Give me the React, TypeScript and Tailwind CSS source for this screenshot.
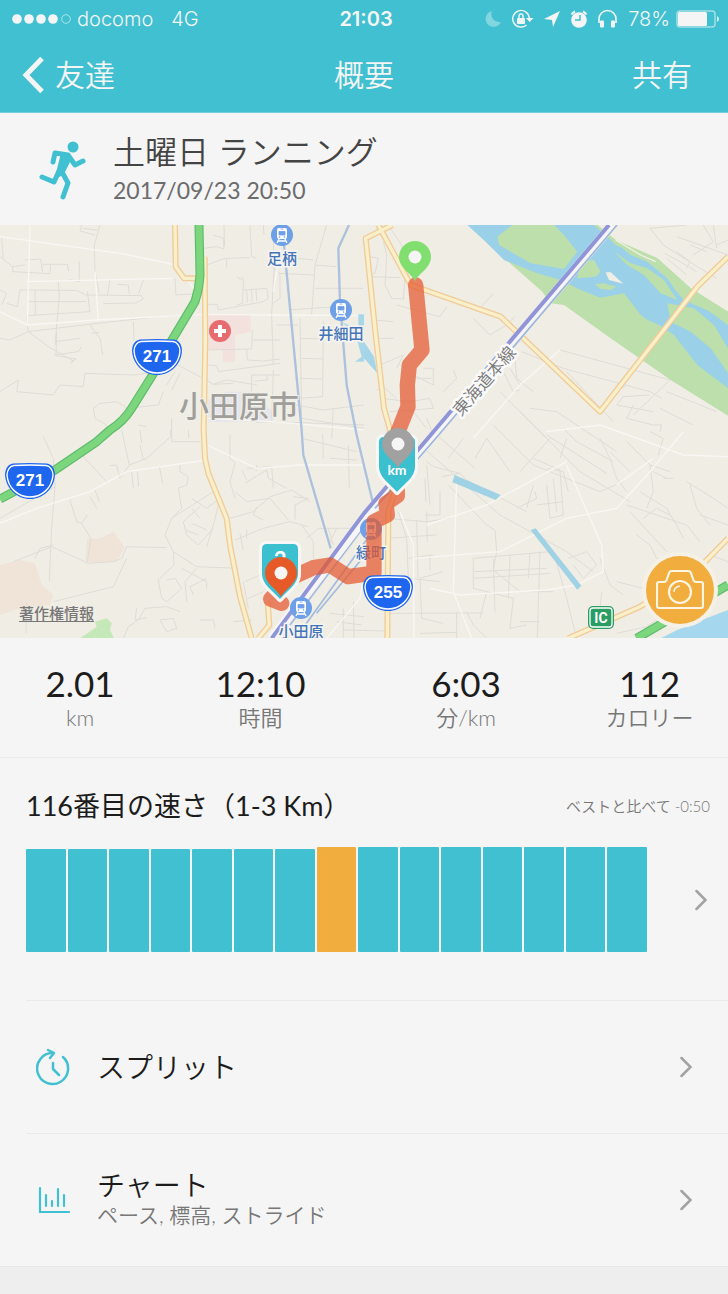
import type { ReactNode } from "react";

const jp = "font-['Lato','Noto_Sans_CJK_JP',sans-serif]";
const ios = "font-['Inter','Noto_Sans_CJK_JP',sans-serif]";

const bars = [103, 103, 103, 103, 103, 103, 103, 105, 105, 105, 105, 105, 105, 105, 105];
const best = 7;

const stats = [
  { value: "2.01", label: "km" },
  { value: "12:10", label: "時間" },
  { value: "6:03", label: "分/km" },
  { value: "112", label: "カロリー" },
];

// geometry below is in thirds of a map point
const mainRoads = [
  "M525 0L527 125L552 160L618 160",
  "M614 95L616 350L611 615L615 700L625 745L680 880L690 960L720 1115L755 1240",
  "M775 1240L808 1200L803 1130",
  "M1177 0L1097 40L1127 330L1152 550L1205 740L1165 860L1162 1240",
  "M1135 0L1232 180L1502 275L1800 560L2092 185L2184 95",
  "M2184 940L2072 1055L1920 1145L1705 1240",
];

const highways = [
  "M597 0L600 150Q598 190 585 230L510 355L470 430L395 550Q370 590 330 615L290 650L165 735L0 822",
  "M2184 1080L1910 1240",
];

const streets = [
  // north west
  "M245 0L240 18L285 30M250 10L292 16M300 0L283 60L285 140L298 205",
  "M5 40L10 100M0 95L38 125L75 120M38 125L38 140L150 146L152 118M75 105L122 102L128 140M128 118L202 118L206 138M238 110L238 170L208 164",
  "M60 195L230 196L258 210L425 212L430 222L408 234L310 236M175 170L178 210L165 360M105 196L106 270M60 195L52 245L20 235M85 230L260 230M80 272L270 260L262 200M0 195L20 205L5 240",
  "M352 178L385 180L388 208M430 165L415 208M330 165L322 210M85 320L300 294L480 275L610 268M85 320L80 275",
  "M0 340L30 345L85 320L145 365L220 408M165 350L240 340M163 390L235 380L245 365M170 320L168 392L228 402L210 415M270 300L300 340L308 390M275 325L298 322M400 290L402 345",
  "M0 500L55 465L50 500L160 510L180 480L250 485L255 445L400 450L440 445L530 418L600 455L640 478L700 475M540 445L515 495M525 440L500 480",
  "M280 550L300 535L350 530L400 560M280 550L285 580L320 600M400 548L475 540L490 500M415 600L440 605M515 580L515 650L600 650M565 615L567 640M525 160L528 210L590 206",
  // north centre
  "M610 70L650 65L672 72L670 40L640 30M672 0L674 65M750 0L755 95L770 100M620 120L675 100L750 98M680 100L680 128M790 0L792 30M820 20L822 130L815 270L820 420M822 130L840 145L940 150M840 145L840 220L820 235",
  "M725 155L730 165L728 235L710 240M728 195L800 190L805 220L790 230L655 255L652 238L625 238M740 195L742 232M755 195L756 230M768 192L770 228M710 155L725 165",
  "M980 0L945 120L935 270M945 120L1010 125M895 100L940 105M945 190L1090 190M865 255L1010 245M900 280L905 580L1092 610M900 340L970 342M905 400L970 402M970 290L968 515L900 520M900 460L970 462M830 300L895 300",
  "M620 375L755 372L757 315M757 345L840 345M740 372L742 405L790 408L840 402M625 420L650 422L655 440L840 415M755 450L755 500M800 450L802 465L765 468M755 450L840 450M640 478L680 465L770 480M820 435L815 590L770 592L765 560",
  "M820 590L1092 600M860 535L970 555L1092 540M905 640L1070 680M968 625L970 700M1045 660L1048 790M990 700L1070 705M1000 550L995 640",
  // west
  "M365 615L388 720L360 760L350 720L330 722M388 720L440 700L512 635L512 615M420 660L430 705M420 615L425 655M395 740L400 790M412 740L416 785M478 725L488 775M245 690L320 770",
  "M130 635L160 700L165 785L155 910L148 1068M165 785L0 880M155 965L265 1015L340 1010L365 1000L380 965L500 968M210 825L230 890L245 895L272 940L262 1010M245 895L262 870M270 815L290 850M285 795L298 830",
  "M40 1010L155 965M105 1000L120 970L160 960M80 1130L78 1225M160 1130L340 1085L380 1000M370 1240L385 1205L415 1185L435 1150L500 1145L540 1160M410 1150L405 1185L440 1178",
  "M535 790L560 780L565 755L540 740L540 720M535 790L545 850L515 880L495 930L520 980L590 1025L715 1030M515 880L640 800M520 980L522 1020L475 1065L485 1120L500 1130L545 1090L525 1060L500 1065M590 1030L555 1070L560 1130",
  "M575 820L620 850L660 820L640 900L620 965M600 845L550 890L560 930L595 960L640 910M575 895L620 915M575 850L600 880M555 915L595 930M480 1185L520 1180L530 1210L500 1220L480 1185M600 1185L640 1185L645 1210",
  "M620 1060L570 1085L580 1110M545 1030L620 1070L620 1090M690 880L760 860L810 815L875 795L930 830M705 800L740 830L810 820L865 885M735 775L800 735L805 760L860 790M725 735L740 765M740 730L815 725L820 790M770 720L768 740",
  "M690 630L690 700L705 715L690 770L705 820M770 845L760 870L790 885M880 815L925 820L885 840L885 885M705 945L790 910L870 890L925 905M720 925L730 975M740 915L740 940M905 900L940 950L940 1000",
  "M955 910L1090 910M955 910L920 940M985 910L1000 960M1010 910L990 950M700 1190L755 1185M735 1070L780 1050M745 1120L790 1100M730 1070L745 1150",
  // around the main station
  "M1030 1150L1030 1240M990 1165L1092 1175M1010 1190L1085 1200M1060 1130L1062 1240M1030 1215L1160 1218M1160 1165L1450 1164",
  "M1260 1060L1265 1180L1330 1195M1160 880L1280 890L1350 880M1160 940L1310 930M1250 885L1254 1060M1280 860L1282 950M1195 860L1220 940L1225 1060L1320 1070M1225 1000L1300 990M1290 990L1290 1035M1260 1060L1330 1040M1260 1225L1370 1222M1370 1160L1370 1240",
  "M1325 755L1380 745L1400 765L1580 860M1345 780L1460 900L1485 915L1490 980L1480 1035M1380 745L1300 725L1280 710M1275 760L1278 830M1320 800L1320 870L1275 870M1420 1000L1650 980M1420 1000L1420 1090L1540 1120M1420 1040L1640 1030M1420 1060L1650 1045",
  "M1480 1035L1560 1100L1660 1100M1480 1000L1485 1160M1530 990L1525 1120M1590 985L1585 1060M1620 980L1612 1240M1660 980L1700 1120L1730 1240M1400 1160L1420 1200L1460 1240M1460 1100L1440 1180M1540 1120L1530 1210L1580 1200M1620 1190L1560 1190",
  // south east
  "M1260 660L1500 870L1700 980L1780 1040M1310 630L1425 730M1390 640L1345 700M1425 700L1460 640L1530 740M1480 600L1600 720L1800 800L1870 770M1560 560L1680 680L1740 740L1890 830M1500 500L1640 640M1560 740L1650 640",
  "M1640 630L1820 745M1690 610L1730 650L1840 710M1700 640L1680 700M1640 730L1690 740L1705 800M1600 700L1680 735L1690 870L1650 880L1640 780M1600 780L1580 850M1660 760L1670 860M1550 850L1610 820L1605 800M1610 840L1690 830",
  "M1800 640L1830 700L1850 760L1880 800M1880 650L1950 720L2010 740M1830 680L1890 740M1950 620L1990 640L1975 690M1920 800L2000 850L2030 900L2050 940M1930 880L1970 850L2010 870M1880 840L2060 900L2100 950",
  "M1910 930L1950 960L1970 1000L2050 1030M1890 860L2000 980M2060 770L2140 820L2184 850M2070 780L2090 850L2130 900M1990 760L2020 760M1960 740L2000 760M1950 720L1960 800L1940 850",
  "M1705 1000L1760 980L1790 1020L1750 1060L1720 1020M1800 1000L1830 1080L1870 1110M1805 1100L1800 1150M1850 1070L1930 1090M1990 1170L1940 1205L1850 1225M2130 990L2184 1010M2100 870L2184 900",
  // inland between the railway and the river
  "M1330 500L1370 460L1360 435M1430 260L1480 205M1420 280L1470 330L1520 300L1545 275M1565 380L1690 430L1950 500L1985 520M1680 375L2010 465L1900 570M1590 550L1670 560L1760 620L1850 680M1700 440L1840 590",
  "M1545 400L1550 460L1600 500M1510 440L1540 500L1560 495M1530 430L1560 480M1850 540L1870 515L1950 510M1880 480L1850 500M1900 540L1880 580L1960 600M1960 600L1985 600L1980 620M1850 540L1960 560M2000 500L2150 560M1980 550L2080 600",
  "M2030 35L2100 60L2184 90M1990 60L2100 130L2150 160M1950 10L1990 60M1950 10L2060 0M1995 85L2040 110L2090 140M2030 80L2070 110L2060 130M2000 100L2060 150M2110 0L2140 50L2080 90M2070 60L2120 80M2150 60L2184 45M2140 0L2150 70",
  "M1150 50L1160 90L1155 180L1175 220L1210 222L1215 160M1110 155L1200 158M1110 95L1135 100L1125 145L1105 145M1165 0L1250 130M1190 240L1300 270L1320 275L1340 245M1120 285L1180 290M1130 340L1180 340M1140 420L1210 390L1190 430",
  "M1240 450L1300 480L1300 430L1270 430M1250 460L1295 460M1130 495L1155 490L1190 520M1145 520L1230 530L1290 520L1300 550L1170 560M1280 580L1300 630M1280 720L1290 840M1240 560L1280 610",
];

const whiteStreets = [
  "M0 35L360 85L530 120M90 0L82 300L0 260M82 300L290 285L610 268L830 270L1092 272M285 140L295 290M560 160L590 205M80 170L520 160",
  "M0 895L110 850L270 800L380 740L620 705M620 660L770 730L900 720L1092 720M840 80L820 200M625 580L820 590L1092 615",
  "M1200 860L1240 960L1242 1240M1240 1000L1500 980L1700 880L1850 850L1950 740L2050 620M1280 900L1460 840L1700 710M1370 760L1360 1100L1415 1240M1290 1090L1380 1110L1640 1095L1730 1080L1810 1040L1805 960L1700 720",
  "M1640 620L1800 600L2050 690L2184 695M1420 640L1560 480L1680 375M1850 780L1960 700M980 1240L1080 1120L1092 1050",
];

function Shield({ x, y, number }: { x: number; y: number; number: string }) {
  return (
    <g transform={`translate(${x} ${y})`}>
      <path
        d="M-17 -17.500Q0 -18.500 17 -17.500C22 -17 25 -12 25 -6C24 8 13 18 0 18C-13 18 -24 8 -25 -6C-25 -12 -22 -17 -17 -17.500Z"
        fill="#1f66ee"
      />
      <path
        d="M-16 -15.500Q0 -16.500 16 -15.500C20 -15 23 -11 23 -6C22 7 12 16 0 16C-12 16 -22 7 -23 -6C-23 -11 -20 -15 -16 -15.500Z"
        fill="none"
        stroke="#fff"
        strokeWidth="1.400"
      />
      <text y="5" textAnchor="middle" fontSize="17" fontWeight="700" fill="#fff" fontFamily="Liberation Sans, sans-serif">
        {number}
      </text>
    </g>
  );
}

function Station({ x, y, name }: { x: number; y: number; name: string }) {
  return (
    <g transform={`translate(${x} ${y})`}>
      <circle r="11" fill="#6ea0e8" />
      <path d="M-3 -7H3Q5 -7 5 -5V2Q5 4 3 4H-3Q-5 4 -5 2V-5Q-5 -7 -3 -7Z" fill="#fff" />
      <path d="M-3 -3.500H3V0H-3ZM-1.500 -6H1.500" fill="#6ea0e8" stroke="#6ea0e8" strokeWidth="0.800" />
      <path d="M-3 4L-5 8M3 4L5 8M-4 6H4" stroke="#fff" strokeWidth="1.300" />
      <circle cx="-2.500" cy="2" r="0.800" fill="#6ea0e8" />
      <circle cx="2.500" cy="2" r="0.800" fill="#6ea0e8" />
      <text
        y="29"
        textAnchor="middle"
        fontSize="15"
        fontWeight="500"
        fill="#4474b8"
        stroke="#f6f4f0"
        strokeWidth="3"
        paintOrder="stroke"
        fontFamily="Noto Sans CJK JP, sans-serif"
      >
        {name}
      </text>
    </g>
  );
}

function Pin({ x, y, color }: { x: number; y: number; color: string }) {
  return (
    <g transform={`translate(${x} ${y})`}>
      <path d="M0 24C-4 16 -16 11 -16 0A16 16 0 0 1 16 0C16 11 4 16 0 24Z" fill={color} />
      <circle r="6.500" fill="#f5f5f5" />
    </g>
  );
}

function KmMarker({ x, y, children }: { x: number; y: number; children: ReactNode }) {
  return (
    <g transform={`translate(${x} ${y})`}>
      <path
        d="M-13 -19H13Q18 -19 18 -14V11C18 21 8 27 0 36C-8 27 -18 21 -18 11V-14Q-18 -19 -13 -19Z"
        fill="#3bc0cf"
        stroke="#f7f7f7"
        strokeWidth="6"
        strokeLinejoin="round"
        paintOrder="stroke"
      />
      <g fill="#fff" fontFamily="Lato, sans-serif" fontWeight="700" textAnchor="middle">
        {children}
      </g>
    </g>
  );
}

function RouteMap() {
  return (
    <svg
      viewBox="0 0 728 413"
      preserveAspectRatio="xMidYMid slice"
      className="block h-[413px] w-full bg-[#f0ede5]"
      role="img"
      aria-label="ランニングのルート"
    >
      <g transform="scale(0.33333)" fill="none" strokeLinejoin="round">
        <path d="M625 270H752V320L705 330V410H668V375H625Z" fill="#f3e1de" />
        <path d="M622 525L680 500L750 500L820 560V590H625Z" fill="#e6e5ea" />
        <path d="M262 940L295 942L340 920L374 967L350 1010L300 1012L256 1010Z" fill="#f0e4d8" />
        <path d="M0 1020L60 1005L105 1015L125 1080L160 1110L150 1140L60 1150L0 1170Z" fill="#f0e4d8" />
        <path d="M240 1240L290 1205L285 1190L320 1180L335 1195L330 1215L342 1240Z" fill="#c5e8b8" />

        {streets.map((d) => (
          <path key={d} d={d} stroke="#dedcd6" strokeWidth="3" />
        ))}
        {whiteStreets.map((d) => (
          <path key={d} d={d} stroke="#f8f7f3" strokeWidth="4" />
        ))}

        <g transform="translate(1092 0)">
          <path
            d="M320 0L365 50L535 200L560 235L600 240L740 340L920 465L1092 572V260L980 190L880 100L755 45L700 0Z"
            fill="#bcdfab"
          />
          <path
            d="M310 0L365 50L420 105L520 145L590 165L650 195L710 218L780 205L830 270L850 285L885 300L930 330L1000 420L1092 490V300L1040 260L960 225L930 190L910 160L850 110L800 90L735 35L690 0Z"
            fill="#9ad1e8"
          />
          <g fill="#bcdfab">
            <path d="M445 0L400 35L405 60L500 115L600 132L640 80L600 30L570 0Z" />
            <path d="M650 110L690 105L710 140L695 155L640 160Z" />
            <path d="M692 178L720 175L757 185L740 195L710 192Z" />
            <path d="M750 80L790 120L840 150L890 205L940 225L900 165L850 130L800 115Z" />
            <path d="M910 235L990 250L1050 300L1092 370V445L1040 370L980 320L920 290Z" />
            <path d="M730 35L755 60L850 100L910 150L930 190L960 225L1030 255L1092 300V260L980 190L880 100L755 45L700 0H690Z" />
          </g>
          <path d="M725 142L740 142L778 176L735 165Z" fill="#f0ede5" />
          <path d="M755 45L830 90L875 110" stroke="#f4f2ea" strokeWidth="4" />
          <path d="M0 350L30 395L40 445L0 400Z" fill="#a5d5e8" />
          <path d="M272 750L410 810L395 825L265 772Z" fill="#a0d2e6" />
          <path d="M500 915L515 910L652 1082L640 1094Z" fill="#a0d2e6" />
          <path d="M1092 1155L1000 1190L940 1215L890 1240H1092Z" fill="#a5d7ee" />
        </g>
        <path d="M1025 290L1055 305L1092 350V410H1065L1085 395L1070 340L1045 310ZM1075 268H1092V320L1075 300Z" fill="#a8d7e8" />

        {mainRoads.map((d) => (
          <path key={d} d={d} stroke="#f1cb98" strokeWidth="18" />
        ))}
        {mainRoads.map((d) => (
          <path key={d} d={d} stroke="#f8f0ca" strokeWidth="10" />
        ))}

        <g stroke="#abc1dc" strokeWidth="7">
          <path d="M852 60L905 615L910 690L992 970" />
          <path d="M1047 0L1015 70L1020 230L1040 480L1070 630L1118 830" />
        </g>
        <path d="M1092 905L870 1200M1110 930L905 1215M1100 985L950 1165M1125 835L960 1050" stroke="#a3bbdc" strokeWidth="5" />

        {highways.map((d) => (
          <path key={d} d={d} stroke="#5dbb6b" strokeWidth="27" />
        ))}
        {highways.map((d) => (
          <path key={d} d={d} stroke="#7bd67d" strokeWidth="20" />
        ))}

        <path d="M1837 0L1302 630L1106 862L815 1240" stroke="#f6f4f5" strokeWidth="28" />
        <path d="M1827 0L1292 630L1092 865L815 1240" stroke="#9095d8" strokeWidth="12" />
        <path d="M1851 0L1316 630L1125 850" stroke="#9cb7da" strokeWidth="5" />
      </g>

      <circle cx="220" cy="106" r="11" fill="#e66c6f" />
      <path d="M220 100V112M214 106H226" stroke="#fff" strokeWidth="4" />

      <g fontFamily="Noto Sans CJK JP, sans-serif" paintOrder="stroke" textAnchor="middle">
        <text x="239" y="192" fontSize="30" fontWeight="500" fill="#a09f9b" stroke="#f2f0ea" strokeWidth="2">
          小田原市
        </text>
        <text
          transform="translate(489 160) rotate(-49)"
          fontSize="17"
          fill="#777"
          stroke="#fafafa"
          strokeWidth="5"
          strokeLinejoin="round"
        >
          東海道本線
        </text>
      </g>

      <Station x={282} y={10} name="足柄" />
      <Station x={341} y={85} name="井細田" />
      <Station x={371} y={304} name="緑町" />
      <Station x={301} y={383} name="小田原" />

      <g transform="scale(0.33333)">
        <path
          d="M1247 180L1266 375L1228 420L1222 480L1224 545L1190 630L1192 812L1158 835L1162 870L1122 890V1044L1045 1055L990 1020L940 1028L880 1055L812 1122L845 1135"
          fill="none"
          stroke="#e4582e"
          strokeOpacity="0.72"
          strokeWidth="46"
          strokeLinecap="round"
          strokeLinejoin="round"
        />
      </g>

      <Shield x={157} y={132} number="271" />
      <Shield x={30} y={256} number="271" />
      <Shield x={388} y={368} number="255" />

      <rect x="588" y="381" width="26" height="23" rx="5" fill="#2a9d63" />
      <rect x="590" y="383" width="22" height="19" rx="3" fill="none" stroke="#fff" strokeWidth="1.300" />
      <text x="601" y="398" textAnchor="middle" fontSize="14" fontWeight="700" fill="#fff" fontFamily="Roboto, sans-serif">
        IC
      </text>

      <KmMarker x={397} y={231}>
        <text y="19" fontSize="14">km</text>
      </KmMarker>
      <KmMarker x={280} y={338}>
        <text y="5" fontSize="22">2</text>
      </KmMarker>
      <Pin x={415} y={32} color="#81df6f" />
      <Pin x={398} y={219} color="#a1a1a1" />
      <Pin x={281} y={348} color="#e65a28" />
    </svg>
  );
}

function StatusBar() {
  return (
    <div className={`grid h-[37px] grid-cols-[1fr_auto_1fr] items-center pr-2 pl-3 text-xl ${ios}`}>
      <div className="flex items-center">
        <svg width="59" height="10" viewBox="0 0 59 10" fill="#f5f5f5">
          <circle cx="5" cy="5" r="4.800" />
          <circle cx="17" cy="5" r="4.800" />
          <circle cx="29" cy="5" r="4.800" />
          <circle cx="41" cy="5" r="4.800" />
          <circle cx="54" cy="5" r="4.300" fill="none" stroke="#c8ecf0" strokeWidth="0.800" />
        </svg>
        <span className="ml-1.5">docomo</span>
        <span className="ml-[18px]">4G</span>
      </div>
      <span className="font-semibold">21:03</span>
      <div className="flex items-center justify-end">
        <svg width="140" height="20" viewBox="0 0 140 20" className="shrink-0" fill="none">
          <path d="M8 2A8 8 0 1 0 17 13A8 8 0 0 1 8 2Z" fill="#82d6df" />
          <path d="M42.500 16A8.300 8.300 0 1 1 45.300 9" stroke="#f5f5f5" strokeWidth="1.400" />
          <path d="M42 9H49.500L45.700 13Z" fill="#f5f5f5" />
          <rect x="33" y="9" width="8" height="6" rx="1" fill="#f5f5f5" />
          <path d="M35 9V7A2 2 0 0 1 39 7V9" stroke="#f5f5f5" strokeWidth="1.400" />
          <path d="M60 10L76 2L69 18L68 11Z" fill="#f5f5f5" />
          <circle cx="95" cy="11" r="7.800" fill="#f5f5f5" />
          <path d="M87.500 5.500A10 10 0 0 1 91 2.500M99 2.500A10 10 0 0 1 102.500 5.500" stroke="#f5f5f5" strokeWidth="2" />
          <path d="M96 6V11H91" stroke="#40c0d0" strokeWidth="1.500" />
          <path d="M115 14V10A8.500 8.500 0 0 1 132 10V14" stroke="#f5f5f5" strokeWidth="1.600" />
          <rect x="116" y="11.500" width="4" height="7" rx="1" fill="#f5f5f5" />
          <rect x="127" y="11.500" width="4" height="7" rx="1" fill="#f5f5f5" />
        </svg>
        <span className="ml-1">78%</span>
        <svg width="44" height="18" viewBox="0 0 44 18" className="ml-1.5 shrink-0">
          <rect x="1" y="1" width="38" height="16" rx="3" fill="none" stroke="#a5e0e6" strokeWidth="1.500" />
          <rect x="2" y="2" width="29" height="14" rx="1.500" fill="#f5f5f5" />
          <path d="M41 6Q43 7 43 9T41 12Z" fill="#d5f0f3" />
        </svg>
      </div>
    </div>
  );
}

function Chevron() {
  return (
    <svg width="12" height="22" viewBox="0 0 12 22" fill="none" className="shrink-0">
      <path d="M1.500 2L10.500 11L1.500 20" stroke="#a2a2a2" strokeWidth="2.500" strokeLinecap="round" />
    </svg>
  );
}

function MenuRow({ icon, title, subtitle }: { icon: ReactNode; title: string; subtitle?: string }) {
  return (
    <a href="#" className="ml-[26px] flex h-[133px] items-center border-t border-[#eaeaea] pr-9 pl-2.5">
      {icon}
      <div className="ml-[27px] flex-1">
        <div className="text-[28px] leading-[30px] text-[#1c1c1c]">{title}</div>
        {subtitle && <div className="text-[21px] leading-[30px] text-[#777]">{subtitle}</div>}
      </div>
      <Chevron />
    </a>
  );
}

export default function App() {
  return (
    <div className={`min-h-screen bg-[#eeeeee] font-[350] ${jp}`} lang="ja">
      <header className="border-b border-[#70d0da] bg-[#40c0d0] text-[#f5f5f5]">
        <StatusBar />
        <nav className="grid h-[75px] grid-cols-[1fr_auto_1fr] items-center text-[30px]">
          <button className="ml-[22px] flex items-center gap-2.5 justify-self-start">
            <svg width="23" height="38" viewBox="0 0 23 38" fill="none">
              <path d="M20 2.500L4 19L20 35.500" stroke="#f5f5f5" strokeWidth="5" />
            </svg>
            友達
          </button>
          <h1>概要</h1>
          <button className="mr-9 justify-self-end">共有</button>
        </nav>
      </header>

      <main className="bg-[#f5f5f5]">
        <section className="flex h-28 items-center gap-[26px] pt-0.5 pl-[39px]">
          <svg width="48" height="60" viewBox="0 0 48 60" fill="none">
            <circle cx="34" cy="7" r="5.500" fill="#40c0d0" />
            <path
              d="M14 22L16 13L29 15L36 25L44 21"
              stroke="#40c0d0"
              strokeWidth="5"
              strokeLinecap="round"
              strokeLinejoin="round"
            />
            <path d="M22 13L30 13L33 18L26 32L25 35L17 38L17 33Z" fill="#40c0d0" />
            <path
              d="M20 31L15 42L3 37M23 32L29 43L24 57"
              stroke="#40c0d0"
              strokeWidth="5"
              strokeLinecap="round"
              strokeLinejoin="round"
            />
          </svg>
          <div>
            <h2 className="text-[32px] leading-[40px] text-[#444]">土曜日 ランニング</h2>
            <p className="text-[23px] leading-[36px] font-normal text-[#6c6c6c]">2017/09/23 20:50</p>
          </div>
        </section>

        <section className="relative">
          <RouteMap />
          <a
            href="#"
            className="absolute bottom-[15px] left-[19px] text-[15px] leading-[20px] font-medium text-[#777] underline underline-offset-2"
          >
            著作権情報
          </a>
          <button
            aria-label="写真を撮る"
            className="absolute right-2.5 bottom-2.5 flex size-[76px] items-center justify-center rounded-full border-4 border-[#f5f1e6] bg-[#f1ae3f]"
          >
            <svg width="48" height="40" viewBox="0 0 48 40" fill="none" stroke="#fdf4e2" strokeWidth="2.200">
              <path
                d="M3 12Q1 12 1 14V36Q1 38 3 38H45Q47 38 47 36V14Q47 12 45 12H40Q38 12 37 9L35 3Q34 1 32 1H16Q14 1 13 3L11 9Q10 12 8 12Z"
                strokeLinejoin="round"
              />
              <circle cx="24" cy="22" r="11" />
              <path d="M18 22Q18 17 24 16" strokeWidth="1.500" />
            </svg>
          </button>
        </section>

        <section className="grid h-[120px] grid-cols-[160fr_201fr_210fr_157fr] items-center border-b border-[#ececec] text-center">
          {stats.map((s) => (
            <div key={s.label}>
              <div className="text-[35px] leading-[40px] font-normal text-[#1c1c1c]">{s.value}</div>
              <div className="text-[22px] leading-[30px] text-[#777]">{s.label}</div>
            </div>
          ))}
        </section>

        <section className="h-[242px] pt-7 pr-[18px] pl-[26px]">
          <div className="flex items-center justify-between">
            <h3 className="text-[27px] leading-[40px] font-normal text-[#1c1c1c]">116番目の速さ（1-3 Km）</h3>
            <span className="text-[15px] text-[#777]">ベストと比べて -0:50</span>
          </div>
          <a href="#" aria-label="速さの比較" className="mt-[21px] flex items-center justify-between pr-[3px]">
            <div className="mr-12 flex flex-1 items-end gap-0.5">
              {bars.map((height, i) => (
                <div
                  key={i}
                  className={`flex-1 rounded-[1px] ${i === best ? "bg-[#f1ae3f]" : "bg-[#40c0d0]"}`}
                  style={{ height }}
                />
              ))}
            </div>
            <Chevron />
          </a>
        </section>

        <MenuRow
          title="スプリット"
          icon={
            <svg width="34" height="38" viewBox="0 0 34 38" fill="none" stroke="#40c0d0" strokeWidth="2.500" strokeLinecap="round">
              <path d="M27 9A15.500 15.500 0 1 1 17 5" />
              <path d="M12 2L18 5L14 10M17 15V21L23 27" strokeLinejoin="round" />
            </svg>
          }
        />
        <MenuRow
          title="チャート"
          subtitle="ペース, 標高, ストライド"
          icon={
            <svg width="34" height="28" viewBox="0 0 34 28" fill="none" stroke="#40c0d0" strokeWidth="2.200" strokeLinecap="round">
              <path d="M4 2V26H33" />
              <path d="M10 9V20M16 15V20M22 3V20M28 9V20" />
            </svg>
          }
        />
      </main>
      <div className="border-t border-[#e6e6e6]" />
    </div>
  );
}
